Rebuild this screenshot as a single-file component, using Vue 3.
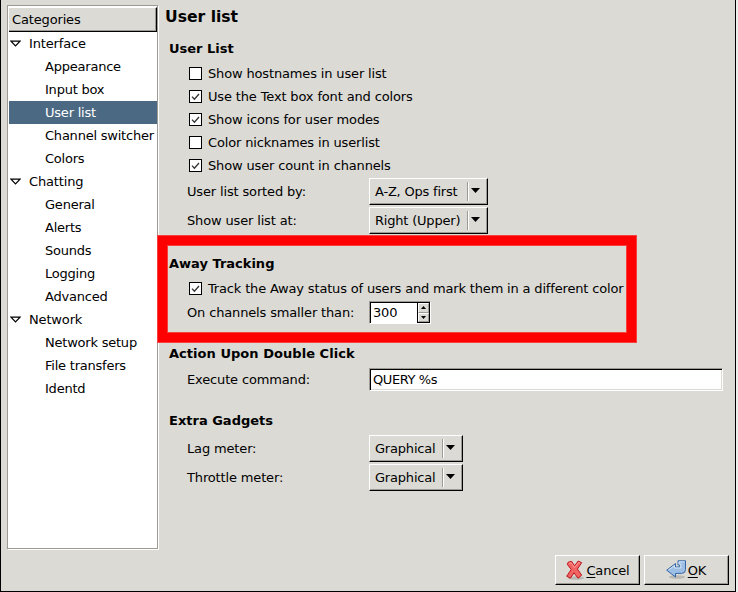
<script setup>
import { ref } from 'vue'

const groups = [
  { name: 'Interface', items: ['Appearance', 'Input box', 'User list', 'Channel switcher', 'Colors'] },
  { name: 'Chatting', items: ['General', 'Alerts', 'Sounds', 'Logging', 'Advanced'] },
  { name: 'Network', items: ['Network setup', 'File transfers', 'Identd'] },
]
const selected = ref('User list')
const options = ref([
  { label: 'Show hostnames in user list', on: false },
  { label: 'Use the Text box font and colors', on: true },
  { label: 'Show icons for user modes', on: true },
  { label: 'Color nicknames in userlist', on: false },
  { label: 'Show user count in channels', on: true },
])
const track = ref(true)
const placement = [
  { label: 'User list sorted by:', value: 'A-Z, Ops first' },
  { label: 'Show user list at:', value: 'Right (Upper)' },
]
const gadgets = [
  { label: 'Lag meter:', value: 'Graphical' },
  { label: 'Throttle meter:', value: 'Graphical' },
]
</script>

<template>
  <div class="window">
    <div class="body">
      <nav class="tree">
        <div class="tree-head">Categories</div>
        <template v-for="g in groups" :key="g.name">
          <div class="row group">
            <svg class="expander" width="11" height="7" viewBox="0 0 11 7"><path d="M1 1.2H10L5.5 5.8Z" fill="#fff" stroke="#000" stroke-width="1.2" /></svg>
            {{ g.name }}
          </div>
          <div v-for="i in g.items" :key="i" class="row leaf" :class="{ selected: i === selected }" @click="selected = i">{{ i }}</div>
        </template>
      </nav>

      <main class="page">
        <h1>User list</h1>
        <h2>User List</h2>
        <div v-for="o in options" :key="o.label" class="check" @click="o.on = !o.on">
          <span class="box"><svg v-if="o.on" width="11" height="11" viewBox="0 0 11 11"><path d="M2 5.6L4.4 8.2L9 3" fill="none" stroke="#333" stroke-width="1.3" /></svg></span>
          <span>{{ o.label }}</span>
        </div>
        <div class="combos">
          <div v-for="c in placement" :key="c.label" class="field">
            <span class="label">{{ c.label }}</span>
            <button class="combo wide"><span class="value">{{ c.value }}</span><span class="sep"></span><svg width="9" height="5" viewBox="0 0 9 5"><path d="M0 0H9L4.5 5Z" /></svg></button>
          </div>
        </div>

        <h2 class="away">Away Tracking</h2>
        <div class="check tracking" @click="track = !track">
          <span class="box"><svg v-if="track" width="11" height="11" viewBox="0 0 11 11"><path d="M2 5.6L4.4 8.2L9 3" fill="none" stroke="#333" stroke-width="1.3" /></svg></span>
          <span>Track the Away status of users and mark them in a different color</span>
        </div>
        <div class="field spin-row">
          <span class="label">On channels smaller than:</span>
          <div class="spin">
            <span class="number">300</span>
            <span class="steps">
              <span class="step"><svg width="5" height="3" viewBox="0 0 5 3"><path d="M0 3H5L2.5 0Z" /></svg></span>
              <span class="step"><svg width="5" height="3" viewBox="0 0 5 3"><path d="M0 0H5L2.5 3Z" /></svg></span>
            </span>
          </div>
        </div>

        <h2 class="action">Action Upon Double Click</h2>
        <div class="field entry-row">
          <span class="label">Execute command:</span>
          <div class="entry">QUERY %s</div>
        </div>

        <h2 class="extra">Extra Gadgets</h2>
        <div class="combos last">
          <div v-for="c in gadgets" :key="c.label" class="field">
            <span class="label">{{ c.label }}</span>
            <button class="combo"><span class="value">{{ c.value }}</span><span class="sep"></span><svg width="9" height="5" viewBox="0 0 9 5"><path d="M0 0H9L4.5 5Z" /></svg></button>
          </div>
        </div>
      </main>
    </div>

    <footer class="actions">
      <button class="action-btn">
        <svg width="20" height="20" viewBox="0 0 20 20">
          <ellipse cx="11" cy="18" rx="8" ry="1.8" fill="#b9b8b3" />
          <path d="M3.2 2.2L6.6 1.3L9.6 5.8L13.2 1L16.7 2.7L12.4 9L16.7 15.2L13 18.2L9 12.8L5.4 18.2L1.7 16.3L6.2 9.4L2.3 4.4Z" fill="#f26464" stroke="#bd171b" stroke-linejoin="round" />
          <path d="M4 3.4L6 2.7L9.5 7.6L13.6 2.6L15.2 3.2" fill="none" stroke="#ff9a98" />
        </svg>
        <span><u>C</u>ancel</span>
      </button>
      <button class="action-btn ok">
        <svg width="20" height="20" viewBox="0 0 20 20">
          <ellipse cx="11" cy="17" rx="8" ry="1.8" fill="#b9b8b3" />
          <path d="M12 .8H19.5V9.5Q19.5 13.4 15.6 13.4H9.5V17L.7 10.2L9.5 3.5V7H13.8V5H12Z" fill="#9dbfe5" stroke="#3465a4" stroke-linejoin="round" />
          <path d="M2.5 10L8.5 5.5V8H14.8V4H13V1.8H18.5" fill="none" stroke="#d3e4f5" />
        </svg>
        <span><u>O</u>K</span>
      </button>
    </footer>
    <div class="highlight"></div>
  </div>
</template>

<style>
body { margin: 0; background: #eeeeec; }
</style>

<style scoped>
* { box-sizing: border-box; }
.window {
  position: relative;
  width: 736px;
  height: 592px;
  border: solid #000;
  border-width: 0 1px 1px;
  background: #dbdad5;
  color: #000;
  font: 13px/23px "DejaVu Sans", sans-serif;
  letter-spacing: -0.15px;
  white-space: nowrap;
  overflow: hidden;
}
.body { display: flex; height: 550px; padding: 5px 12px 0 6px; }
.tree {
  width: 151px;
  height: 544px;
  flex: none;
  padding: 1px 0 0 1px;
  background: #fff;
  border: 1px solid #9c9a92;
  box-shadow: 1px 1px #fff;
}
.tree-head {
  height: 25px;
  padding-left: 3px;
  line-height: 23px;
  background: #dbdad5;
  border: solid;
  border-width: 1px 1px 1px 0;
  border-color: #fff #000 #000;
  box-shadow: inset -1px -1px #9c9a92;
}
.row { height: 23px; }
.group { display: flex; align-items: center; }
.expander { margin: 0 8px 1px 1px; }
.leaf { padding-left: 36px; letter-spacing: -0.22px; }
.selected { background: #4b6983; color: #fff; }
.page { flex: 1; margin-left: 7px; }
h1, h2 { letter-spacing: 0; }
h1 { margin: 0 0 8px; height: 24px; font-size: 15.6px; line-height: 24px; }
h2 { margin: 0 0 2px 4px; height: 23px; font-size: 13px; line-height: 23px; }
.check { display: flex; align-items: center; height: 23px; padding-left: 24px; }
.tracking { letter-spacing: -0.17px; }
.box { width: 13px; height: 13px; margin-right: 6px; border: 1px solid #000; background: #fff; }
.box svg { display: block; }
.combos { display: flex; flex-direction: column; gap: 2px; margin-top: 1px; }
.combos.last { margin-top: 0; }
.field { display: flex; align-items: center; padding-left: 22px; }
.label { width: 182px; flex: none; }
button { color: #000; font: inherit; background: #dbdad5; }
.combo {
  display: flex;
  align-items: center;
  width: 94px;
  height: 27px;
  padding: 0 7px 0 5px;
  letter-spacing: -0.2px;
  border: solid;
  border-width: 1px;
  border-color: #fff #000 #000 #fff;
  box-shadow: inset -1px -1px #9c9a92;
}
.wide { width: 119px; }
.value { flex: 1; text-align: left; }
.sep { width: 2px; height: 19px; margin-right: 2px; background: #9c9a92; border-right: 1px solid #fff; }
.combo svg { margin-bottom: 2px; }
.away { margin-top: 18px; }
.spin-row { height: 23px; margin-top: 1px; }
.spin { display: flex; width: 62px; height: 23px; border: 1px solid; border-color: #9c9a92 #fff #fff #9c9a92; }
.number { width: 47px; padding-left: 2px; line-height: 20px; background: #fff; border: solid #000; border-width: 1px 0 0 1px; }
.steps { display: flex; flex-direction: column; flex: 1; border: 1px solid #000; }
.step { flex: 1; display: flex; align-items: center; justify-content: center; border: solid; border-width: 1px; border-color: #fff #9c9a92 #9c9a92 #fff; }
.action { margin-top: 18px; margin-bottom: 3px; letter-spacing: 0.04px; }
.entry-row { height: 23px; }
.entry { width: 354px; height: 23px; padding-left: 3px; letter-spacing: -0.4px; line-height: 21px; background: #fff; border: 1px solid; border-color: #9c9a92 #fff #fff #9c9a92; box-shadow: inset 1px 1px #000, inset -1px -1px #dbdad5; }
.extra { margin-top: 18px; margin-bottom: 3px; }
.actions { display: flex; justify-content: flex-end; gap: 4px; padding: 5px 6px 0 0; }
.action-btn {
  display: flex;
  align-items: center;
  justify-content: center;
  gap: 1px;
  width: 85px;
  height: 30px;
  padding: 0;
  letter-spacing: -0.15px;
  border: 1px solid;
  border-color: #fff #000 #000 #fff;
  box-shadow: inset -1px -1px #9c9a92;
}
.action-btn.ok { gap: 2px; padding-right: 1px; }
.action-btn svg { display: block; }
.action-btn u { text-underline-offset: 2px; }
.highlight {
  position: absolute;
  left: 157px;
  top: 236px;
  width: 478px;
  height: 106px;
  border: 9px solid #f00;
  box-shadow: 0 0 0 1px #f5403e, inset 0 0 0 1px #f5403e;
  pointer-events: none;
}
</style>
